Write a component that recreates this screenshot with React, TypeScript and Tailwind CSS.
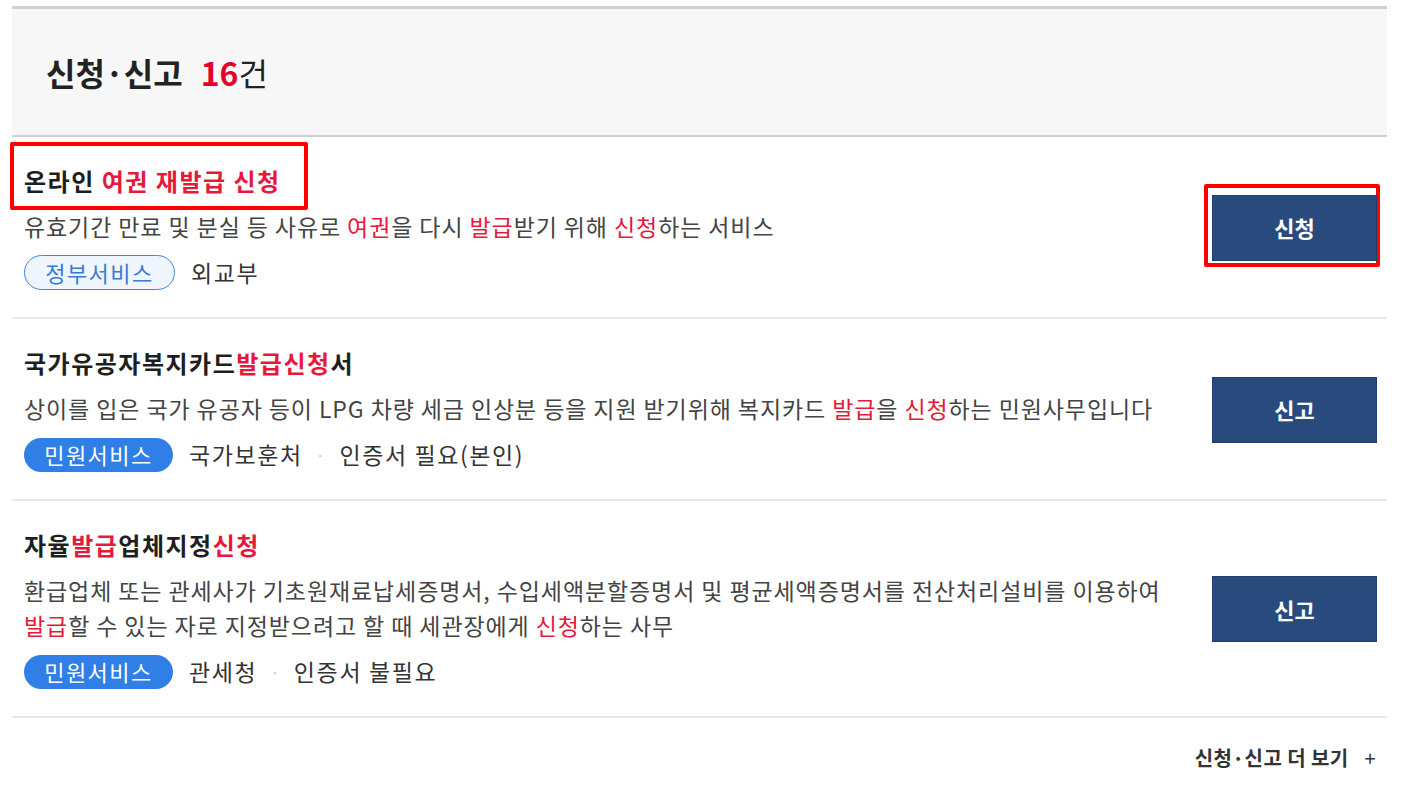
import React from "react";

type Tag = { label: string; kind: "gov" | "civil" };

type Item = {
  title: React.ReactNode;
  desc: React.ReactNode;
  tag: Tag;
  meta: string[];
  action: string;
  marked?: boolean;
};

const R = ({ children }: { children: React.ReactNode }) => (
  <span className="text-[#e8173c]">{children}</span>
);

const items: Item[] = [
  {
    title: (
      <>
        온라인 <R>여권 재발급 신청</R>
      </>
    ),
    desc: (
      <>
        유효기간 만료 및 분실 등 사유로 <R>여권</R>을 다시 <R>발급</R>받기 위해 <R>신청</R>하는 서비스
      </>
    ),
    tag: { label: "정부서비스", kind: "gov" },
    meta: ["외교부"],
    action: "신청",
    marked: true,
  },
  {
    title: (
      <>
        국가유공자복지카드<R>발급신청</R>서
      </>
    ),
    desc: (
      <>
        상이를 입은 국가 유공자 등이 LPG 차량 세금 인상분 등을 지원 받기위해 복지카드 <R>발급</R>을 <R>신청</R>하는 민원사무입니다
      </>
    ),
    tag: { label: "민원서비스", kind: "civil" },
    meta: ["국가보훈처", "인증서 필요(본인)"],
    action: "신고",
  },
  {
    title: (
      <>
        자율<R>발급</R>업체지정<R>신청</R>
      </>
    ),
    desc: (
      <>
        환급업체 또는 관세사가 기초원재료납세증명서, 수입세액분할증명서 및 평균세액증명서를 전산처리설비를 이용하여
        <br />
        <R>발급</R>할 수 있는 자로 지정받으려고 할 때 세관장에게 <R>신청</R>하는 사무
      </>
    ),
    tag: { label: "민원서비스", kind: "civil" },
    meta: ["관세청", "인증서 불필요"],
    action: "신고",
  },
];

function Badge({ tag }: { tag: Tag }) {
  if (tag.kind === "gov") {
    return (
      <span className="inline-flex items-center justify-center h-[35px] w-[151px] rounded-full border-[1.5px] border-[#3f86e4] bg-[#eef5fd] text-[22px] tracking-[1.5px] text-[#3a7ad6]">
        {tag.label}
      </span>
    );
  }
  return (
    <span className="inline-flex items-center justify-center h-[34px] w-[149px] rounded-full bg-[#2f7fe6] text-[22px] tracking-[1.5px] text-white">
      {tag.label}
    </span>
  );
}

export default function App() {
  return (
    <div
      className="min-h-screen bg-white pt-[6px]"
      style={{ fontFamily: '"Noto Sans CJK KR", "Noto Sans", sans-serif' }}
    >
      <div className="ml-[12px] w-[1375px]">
        {/* Header */}
        <div className="h-[131px] border-t-[3px] border-b-2 border-[#cfcfcf] bg-[#f7f7f7] flex items-center px-[34px]">
          <h1 className="text-[32px] font-bold text-[#222] leading-none">
            신청·신고
            <span className="ml-[18px] text-[#e4002b]">16</span>
            <span className="font-normal">건</span>
          </h1>
        </div>

        {/* List */}
        <ul>
          {items.map((item, i) => (
            <li
              key={i}
              className="relative flex items-center justify-between border-b-2 border-[#e8e8e8] pl-3 pr-[10px] pt-[28px] pb-[27px]"
            >
              {item.marked && (
                <div className="absolute left-[-2px] top-[5px] w-[298px] h-[68px] border-4 border-[#ff0000] rounded-[2px]" />
              )}
              <div className="flex-1">
                <h2 className="text-[24px] tracking-[1.5px] leading-[32px] font-semibold text-[#1e1e1e]">
                  {item.title}
                </h2>
                <p className="mt-3 text-[23px] tracking-[0.9px] leading-[35px] text-[#444]">{item.desc}</p>
                <div className="mt-[11px] flex items-center h-[35px]">
                  <Badge tag={item.tag} />
                  <div className="ml-4 flex items-center text-[23px] tracking-[1.6px] text-[#333]">
                    {item.meta.map((m, j) => (
                      <React.Fragment key={j}>
                        {j > 0 && <span className="mx-[13px] text-[#c8c8c8] text-[16px]">·</span>}
                        <span>{m}</span>
                      </React.Fragment>
                    ))}
                  </div>
                </div>
              </div>
              <div className="relative">
                {item.marked && (
                  <div className="absolute left-[-8px] top-[-11px] right-[-3px] bottom-[-6px] border-4 border-[#ff0000] rounded-[2px]" />
                )}
                <button className="relative w-[165px] h-[66px] bg-[#284a7c] border border-[#1f3e6c] text-white text-[22px] font-bold">
                  {item.action}
                </button>
              </div>
            </li>
          ))}
        </ul>

        {/* More */}
        <div className="flex justify-end items-center pt-[26px] pr-[11px]">
          <a className="flex items-center text-[20px] tracking-[0.4px] font-semibold text-[#333] leading-[28px]">
            신청·신고 더 보기
            <span className="ml-[16px] font-normal text-[20px]">+</span>
          </a>
        </div>
      </div>
    </div>
  );
}
